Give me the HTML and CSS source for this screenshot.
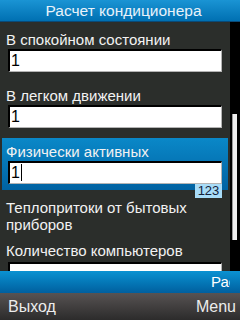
FILE: index.html
```html
<!DOCTYPE html>
<html lang="ru">
<head>
    <meta charset="UTF-8">
    <meta name="viewport" content="width=device-width, initial-scale=1.0">
    <title>Расчет кондиционера</title>
    <link rel="stylesheet" href="styles.css">
</head>
<body>
    <div class="screen">
        <div class="title">Расчет кондиционера</div>
        <div class="main">
            <div class="content">
                <div class="field">
                    <div class="label">В спокойном состоянии</div>
                    <div class="input">1</div>
                </div>
                <div class="field">
                    <div class="label">В легком движении</div>
                    <div class="input">1</div>
                </div>
                <div class="field focus">
                    <div class="label">Физически активных</div>
                    <div class="input">1<span class="caret"></span></div>
                    <div class="badge">123</div>
                </div>
                <div class="field text-only">
                    <div class="label">Теплопритоки от бытовых приборов</div>
                </div>
                <div class="field last">
                    <div class="label">Количество компьютеров</div>
                    <div class="input"></div>
                </div>
            </div>
            <div class="scroll">
                <div class="thumb"></div>
            </div>
        </div>
        <div class="ticker-bar">
            <div class="ticker">Расчет</div>
        </div>
        <div class="softkeys">
            <span>Выход</span>
            <span>Menu</span>
        </div>
    </div>
</body>
</html>
```

FILE: styles.css
```css
body {
    margin: 0;
    padding: 0;
    width: 240px;
    height: 320px;
    overflow: hidden;
    background-color: #2b2e2b;
    font-family: "Liberation Sans", Arial, sans-serif;
    font-size: 15px;
    color: #f2f2f2;
}
.screen {
    display: flex;
    flex-direction: column;
    height: 320px;
}
.title {
    height: 22px;
    line-height: 21px;
    padding-left: 7px;
    text-align: center;
    font-size: 15.5px;
    color: #e8f2fa;
    background: linear-gradient(#1a94d4, #0070b2);
    border-bottom: 1px solid #0a4a78;
    box-sizing: border-box;
}
.main {
    display: flex;
    height: 249px;
}
.content {
    width: 230px;
    overflow: hidden;
    background-color: #2b2e2b;
    padding-top: 4px;
    display: flex;
    flex-direction: column;
    gap: 4px;
}
.field {
    margin: 0 2px;
    padding: 5px 0 6px;
    flex-shrink: 0;
}
.field.focus {
    position: relative;
    background: linear-gradient(#0a88c8, #0062a2);
}
.field.text-only {
    padding-bottom: 0;
}
.label {
    padding-left: 4px;
    line-height: 17px;
    width: 200px;
}
.input {
    margin: 1px 6px 0;
    height: 23px;
    box-sizing: border-box;
    background-color: #fff;
    border-top: 2px solid #000;
    border-left: 2px solid #000;
    border-right: 1px solid #b4b4b4;
    border-bottom: 1px solid #b4b4b4;
    color: #000;
    font-size: 16px;
    line-height: 20px;
    padding-left: 1px;
}
.field.last .input {
    margin-top: 3px;
}
.caret {
    display: inline-block;
    width: 1px;
    height: 17px;
    background-color: #000;
    vertical-align: -3px;
    margin-left: 1px;
}
.badge {
    position: absolute;
    right: 6px;
    top: 46px;
    width: 27px;
    height: 14px;
    background-color: #a8dcf8;
    color: #14213a;
    font-size: 13px;
    line-height: 14px;
    text-align: center;
}
.scroll {
    width: 10px;
    background-color: #000;
    padding-top: 92px;
    box-sizing: border-box;
}
.thumb {
    width: 5px;
    height: 126px;
    margin-left: 2px;
    background-color: #eeeeee;
    border-left: 1px solid #9a9a9a;
    box-sizing: border-box;
}
.ticker-bar {
    height: 22px;
    background: linear-gradient(#0a92d2, #005f9e);
}
.ticker {
    width: 230px;
    overflow: hidden;
    white-space: nowrap;
    padding-left: 211px;
    box-sizing: border-box;
    line-height: 22px;
    font-size: 15px;
    color: #fff;
}
.softkeys {
    flex: 1;
    display: flex;
    justify-content: space-between;
    align-items: center;
    padding: 0 4px 0 8px;
    background: linear-gradient(#575353, #2c2b2b);
    color: #ececec;
    font-size: 16px;
}
```
